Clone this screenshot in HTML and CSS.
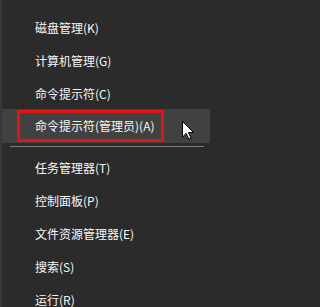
FILE: index.html
```html
<!DOCTYPE html>
<html lang="zh-CN">
<head>
<meta charset="utf-8">
<title>Win+X 菜单</title>
<link rel="stylesheet" href="styles.css">
</head>
<body>
<div class="menu">
  <div class="item first">网络连接(W)</div>
  <div class="item">磁盘管理(K)</div>
  <div class="item">计算机管理(G)</div>
  <div class="item">命令提示符(C)</div>
  <div class="item active"><span class="mark">命令提示符(管理员)(A)</span></div>
  <div class="sep"></div>
  <div class="item">任务管理器(T)</div>
  <div class="item">控制面板(P)</div>
  <div class="item">文件资源管理器(E)</div>
  <div class="item">搜索(S)</div>
  <div class="item">运行(R)</div>
</div>
<svg class="cursor" width="13" height="19" viewBox="0 0 13 19">
  <path d="M0.5 0.5 L0.5 16 L4.2 12.4 L6.8 18.2 L9 17.2 L6.5 11.5 L11.5 11.5 Z" fill="#ffffff" stroke="#000000" stroke-width="1" stroke-linejoin="miter"/>
</svg>
</body>
</html>
```
FILE: styles.css
```css
html, body {
  margin: 0;
  padding: 0;
  background: #2b2b2b;
  overflow: hidden;
}
body {
  width: 210px;
  height: 307px;
  position: relative;
  font-family: "Noto Sans CJK SC", "Noto Sans", sans-serif;
  font-size: 12px;
  color: #f7f7f7;
}
.menu {
  margin-top: -22px;
  border-left: 2px solid #383838;
  display: flex;
  flex-direction: column;
}
.item {
  height: 33px;
  display: flex;
  align-items: center;
  padding-left: 33px;
  line-height: 1;
  white-space: nowrap;
  box-sizing: border-box;
}
.item.first {
  padding-bottom: 3px;
}
.item.active {
  background: #414141;
  padding-left: 15px;
  height: 34px;
  margin-top: -1px;
  margin-bottom: 1px;
}
.mark {
  height: 26px;
  display: flex;
  align-items: center;
  border: 3px solid #e41414;
  padding: 0 5px 0 15px;
  width: 121px;
}
.sep {
  height: 1px;
  background: #7c7c7c;
  margin: 2px 6px 4px 8px;
}
.cursor {
  position: absolute;
  left: 182px;
  top: 121px;
}
```
